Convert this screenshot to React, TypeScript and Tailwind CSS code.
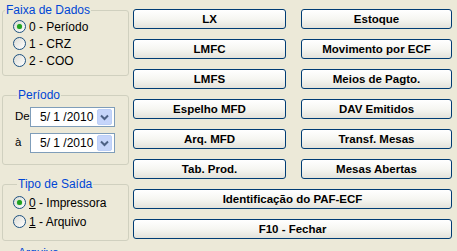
import React from 'react';

const font = "font-['Liberation_Sans',Arial,sans-serif]";

function Radio({ checked, children }: { checked?: boolean; children: React.ReactNode }) {
  return (
    <div className="flex items-center gap-[3px]">
      <span className="w-[13px] h-[13px] rounded-full border border-[#1c5180] bg-gradient-to-br from-[#dcdcd5] to-white flex items-center justify-center">
        {checked && <span className="w-[5px] h-[5px] rounded-full bg-[#21a121] shadow-[0_0_1px_#5bd35b]" />}
      </span>
      <span className="text-black leading-[14px]">{children}</span>
    </div>
  );
}

function DateBox({ value }: { value: string }) {
  return (
    <div className="w-[85px] h-[20px] bg-white border border-[#7f9db9] flex items-center justify-between pl-[9px] pr-[2px]">
      <span className="leading-[14px]">{value}</span>
      <span className="w-[15px] h-[16px] rounded-[2px] bg-[#c6d5fa] border border-[#bccff7] flex items-center justify-center">
        <svg width="9" height="7" viewBox="0 0 9 7">
          <path d="M1 1.5 L4.5 5 L8 1.5" fill="none" stroke="#4d6185" strokeWidth="2" />
        </svg>
      </span>
    </div>
  );
}

function Btn({ label, wide }: { label: string; wide?: boolean }) {
  return (
    <button
      className={
        'h-[20px] rounded-[3px] border border-[#003c74] bg-gradient-to-b from-white via-[#f6f6f2] to-[#e3e2da] text-black font-bold text-[11.5px] leading-[18px] ' +
        (wide ? 'col-span-2' : '')
      }
    >
      {label}
    </button>
  );
}

const buttons = [
  'LX',
  'Estoque',
  'LMFC',
  'Movimento por ECF',
  'LMFS',
  'Meios de Pagto.',
  'Espelho MFD',
  'DAV Emitidos',
  'Arq. MFD',
  'Transf. Mesas',
  'Tab. Prod.',
  'Mesas Abertas',
];

export default function App() {
  return (
    <div className={`w-[457px] h-[251px] overflow-hidden bg-[#ece9d8] flex text-[12px] text-black ${font}`}>
      {/* left panel */}
      <div className="ml-[2px] w-[127px] flex flex-col shrink-0">
        <fieldset className="mt-[4px] border border-[#d0d0bf] rounded-[3px] pl-[10px] pb-[6px]">
          <legend className="-ml-[8px] px-[1px] leading-[13px] text-[#0046d5]">Faixa de Dados</legend>
          <div className="pt-[1px] flex flex-col">
            <div className="h-[17px] flex items-center"><Radio checked>0 - Período</Radio></div>
            <div className="h-[17px] flex items-center"><Radio>1 - CRZ</Radio></div>
            <div className="h-[17px] flex items-center"><Radio>2 - COO</Radio></div>
          </div>
        </fieldset>

        <fieldset className="mt-[13px] border border-[#d0d0bf] rounded-[3px] pl-[12px] pb-[11px]">
          <legend className="ml-[2px] px-[1px] leading-[13px] text-[#0046d5]">Período</legend>
          <div className="pt-[5px] flex flex-col gap-[6px]">
            <div className="flex items-center">
              <span className="w-[15px] text-[11.5px]">De</span>
              <DateBox value="5/ 1 /2010" />
            </div>
            <div className="flex items-center">
              <span className="w-[15px] text-[11.5px]">à</span>
              <DateBox value="5/ 1 /2010" />
            </div>
          </div>
        </fieldset>

        <fieldset className="mt-[13px] border border-[#d0d0bf] rounded-[3px] pl-[10px] pb-[9px]">
          <legend className="ml-[4px] px-[1px] leading-[13px] text-[#0046d5]">Tipo de Saída</legend>
          <div className="pt-[2px] flex flex-col">
            <div className="h-[19px] flex items-center"><Radio checked><u>0</u> - Impressora</Radio></div>
            <div className="h-[19px] flex items-center"><Radio><u>1</u> - Arquivo</Radio></div>
          </div>
        </fieldset>

        <fieldset className="mt-[6px] border border-[#d0d0bf] rounded-[3px] h-[40px]">
          <legend className="ml-[14px] px-[1px] leading-[13px] text-[#0046d5]">Arquivo</legend>
        </fieldset>
      </div>

      {/* buttons */}
      <div className="ml-[4px] pt-[9px] grid grid-cols-[153px_151px] gap-x-[15px] gap-y-[10px] content-start">
        {buttons.map((b) => (
          <Btn key={b} label={b} />
        ))}
        <Btn label="Identificação do PAF-ECF" wide />
        <Btn label="F10 - Fechar" wide />
      </div>
    </div>
  );
}
